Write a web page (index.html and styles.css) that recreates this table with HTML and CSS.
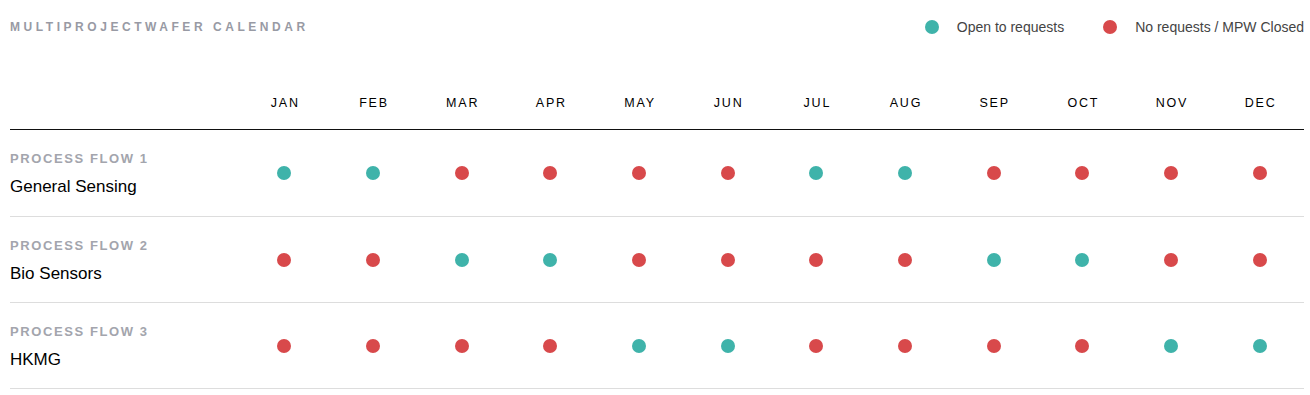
FILE: index.html
```html
<!DOCTYPE html>
<html>
<head>
<meta charset="utf-8">
<link rel="stylesheet" href="styles.css">
</head>
<body>
<div class="page">
  <div class="topbar">
    <div class="title">MULTIPROJECTWAFER CALENDAR</div>
    <div class="legend">
      <div class="legend-item"><span class="dot open"></span><span>Open to requests</span></div>
      <div class="legend-item"><span class="dot closed"></span><span>No requests / MPW Closed</span></div>
    </div>
  </div>
  <div class="grid head">
    <div></div>
    <div class="month">JAN</div><div class="month">FEB</div><div class="month">MAR</div><div class="month">APR</div>
    <div class="month">MAY</div><div class="month">JUN</div><div class="month">JUL</div><div class="month">AUG</div>
    <div class="month">SEP</div><div class="month">OCT</div><div class="month">NOV</div><div class="month">DEC</div>
  </div>
  <div class="grid row first">
    <div class="label"><div class="flow">PROCESS FLOW 1</div><div class="name">General Sensing</div></div>
    <div class="cell"><span class="dot open"></span></div>
    <div class="cell"><span class="dot open"></span></div>
    <div class="cell"><span class="dot closed"></span></div>
    <div class="cell"><span class="dot closed"></span></div>
    <div class="cell"><span class="dot closed"></span></div>
    <div class="cell"><span class="dot closed"></span></div>
    <div class="cell"><span class="dot open"></span></div>
    <div class="cell"><span class="dot open"></span></div>
    <div class="cell"><span class="dot closed"></span></div>
    <div class="cell"><span class="dot closed"></span></div>
    <div class="cell"><span class="dot closed"></span></div>
    <div class="cell"><span class="dot closed"></span></div>
  </div>
  <div class="grid row">
    <div class="label"><div class="flow">PROCESS FLOW 2</div><div class="name">Bio Sensors</div></div>
    <div class="cell"><span class="dot closed"></span></div>
    <div class="cell"><span class="dot closed"></span></div>
    <div class="cell"><span class="dot open"></span></div>
    <div class="cell"><span class="dot open"></span></div>
    <div class="cell"><span class="dot closed"></span></div>
    <div class="cell"><span class="dot closed"></span></div>
    <div class="cell"><span class="dot closed"></span></div>
    <div class="cell"><span class="dot closed"></span></div>
    <div class="cell"><span class="dot open"></span></div>
    <div class="cell"><span class="dot open"></span></div>
    <div class="cell"><span class="dot closed"></span></div>
    <div class="cell"><span class="dot closed"></span></div>
  </div>
  <div class="grid row">
    <div class="label"><div class="flow">PROCESS FLOW 3</div><div class="name">HKMG</div></div>
    <div class="cell"><span class="dot closed"></span></div>
    <div class="cell"><span class="dot closed"></span></div>
    <div class="cell"><span class="dot closed"></span></div>
    <div class="cell"><span class="dot closed"></span></div>
    <div class="cell"><span class="dot open"></span></div>
    <div class="cell"><span class="dot open"></span></div>
    <div class="cell"><span class="dot closed"></span></div>
    <div class="cell"><span class="dot closed"></span></div>
    <div class="cell"><span class="dot closed"></span></div>
    <div class="cell"><span class="dot closed"></span></div>
    <div class="cell"><span class="dot open"></span></div>
    <div class="cell"><span class="dot open"></span></div>
  </div>
</div>
</body>
</html>
```

FILE: styles.css
```css
html, body {
  margin: 0;
  padding: 0;
  background: #ffffff;
}
body {
  font-family: "Liberation Sans", Arial, sans-serif;
  color: #111;
}
.page {
  padding: 0 6px 0 10px;
}
.topbar {
  display: flex;
  justify-content: space-between;
  align-items: center;
  height: 52px;
  padding-top: 1px;
}
.title {
  font-size: 12px;
  font-weight: bold;
  letter-spacing: 3.55px;
  color: #989aa4;
}
.legend {
  display: flex;
  gap: 39px;
  font-size: 14px;
  color: #444;
}
.legend-item {
  display: flex;
  align-items: center;
  gap: 18px;
}
.dot {
  display: inline-block;
  width: 14px;
  height: 14px;
  border-radius: 50%;
}
.dot.open { background: #3fb3aa; }
.dot.closed { background: #d8494b; }
.grid {
  display: grid;
  grid-template-columns: 230px repeat(12, 1fr);
}
.head {
  height: 76px;
  border-bottom: 1px solid #111;
  align-items: end;
}
.month {
  text-align: center;
  font-size: 12.5px;
  letter-spacing: 1.8px;
  padding-bottom: 19px;
  padding-left: 2px;
  color: #000;
}
.row {
  height: 85px;
  border-bottom: 1px solid #dddddd;
  align-items: center;
}
.row.first {
  height: 86px;
}
.first .cell {
  padding-bottom: 1px;
}
.label {
  display: flex;
  flex-direction: column;
  gap: 11px;
  padding-top: 2px;
}
.flow {
  font-size: 13px;
  font-weight: bold;
  letter-spacing: 1.6px;
  color: #a3a5ad;
}
.name {
  font-size: 17px;
  color: #000;
}
.cell {
  display: flex;
  justify-content: center;
  align-items: center;
}
```
